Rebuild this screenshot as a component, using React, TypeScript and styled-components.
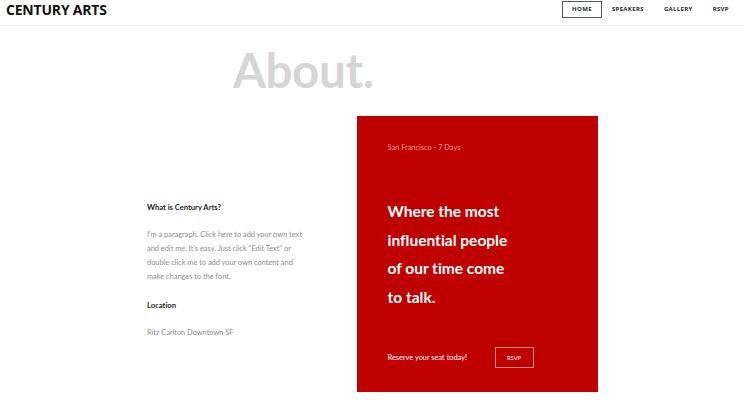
import React from "react";
import styled, { createGlobalStyle } from "styled-components";

const Global = createGlobalStyle`
  html, body { margin: 0; padding: 0; background: #ffffff; }
  body {
    font-family: Lato, "Open Sans", sans-serif;
    font-variant-ligatures: none;
    color: #222;
  }
  * { box-sizing: border-box; }
`;

const Header = styled.header`
  height: 26px;
  display: flex;
  align-items: center;
  justify-content: space-between;
  padding: 0 5px 0 6px;
  border-bottom: 1px solid #f1f1f1;
`;

const Logo = styled.div`
  font-family: "Open Sans", sans-serif;
  font-weight: 700;
  font-size: 14px;
  letter-spacing: -0.2px;
  color: #111;
  margin-top: -6px;
`;

const Nav = styled.nav`
  display: flex;
  align-items: center;
  margin-top: -7px;
`;

const NavItem = styled.a<{ $active?: boolean }>`
  display: flex;
  align-items: center;
  justify-content: center;
  height: 17px;
  padding: 0 9px;
  font-family: "Open Sans", sans-serif;
  font-size: 6px;
  font-weight: 700;
  letter-spacing: 0.35px;
  color: #222;
  border: 1px solid ${(p) => (p.$active ? "#555" : "transparent")};
`;

const Main = styled.main`
  width: 452px;
  margin: 0 auto;
`;

const Title = styled.h1`
  margin: 16px 0 0 87px;
  font-family: Lato, sans-serif;
  font-weight: 700;
  font-size: 47.5px;
  line-height: 56px;
  letter-spacing: -0.4px;
  color: #d6d6d6;
`;

const Row = styled.div`
  display: flex;
  align-items: flex-start;
  margin-top: 18px;
`;

const Info = styled.section`
  width: 211px;
  padding: 84px 30px 0 1px;
`;

const Heading = styled.h3`
  margin: 0;
  font-size: 7.6px;
  font-weight: 700;
  line-height: 14px;
  color: #1e1e1e;
`;

const Para = styled.p`
  margin: 14px 0 14px;
  font-size: 7.4px;
  line-height: 14px;
  color: #8c8c8c;
  white-space: nowrap;
`;

const Card = styled.section`
  width: 242px;
  height: 276px;
  background: #bf0000;
  padding: 26px 20px 0 31px;
  display: flex;
  flex-direction: column;
`;

const Eyebrow = styled.div`
  font-size: 7.4px;
  line-height: 12px;
  color: #f19a9a;
`;

const Headline = styled.h2`
  margin: 43px 0 0;
  font-size: 15.5px;
  font-weight: 700;
  line-height: 28.5px;
  color: #ffffff;
`;

const Footer = styled.div`
  display: flex;
  align-items: center;
  margin-top: 36px;
`;

const Reserve = styled.span`
  font-size: 7.4px;
  color: #ffffff;
  width: 107px;
`;

const RsvpButton = styled.button`
  width: 39px;
  height: 21px;
  background: transparent;
  border: 1px solid #f28a8a;
  color: #ffffff;
  font-family: inherit;
  font-size: 5.8px;
  padding: 0;
`;

export default function App() {
  return (
    <>
      <Global />
      <Header>
        <Logo>CENTURY ARTS</Logo>
        <Nav>
          <NavItem $active>HOME</NavItem>
          <NavItem>SPEAKERS</NavItem>
          <NavItem>GALLERY</NavItem>
          <NavItem>RSVP</NavItem>
        </Nav>
      </Header>
      <Main>
        <Title>About.</Title>
        <Row>
          <Info>
            <Heading>What is Century Arts?</Heading>
            <Para>
              I'm a paragraph. Click here to add your own text
              <br />
              and edit me. It's easy. Just click “Edit Text” or
              <br />
              double click me to add your own content and
              <br />
              make changes to the font.
            </Para>
            <Heading>Location</Heading>
            <Para>Ritz Carlton Downtown SF</Para>
          </Info>
          <Card>
            <Eyebrow>San Francisco - 7 Days</Eyebrow>
            <Headline>
              Where the most
              <br />
              influential people
              <br />
              of our time come
              <br />
              to talk.
            </Headline>
            <Footer>
              <Reserve>Reserve your seat today!</Reserve>
              <RsvpButton>RSVP</RsvpButton>
            </Footer>
          </Card>
        </Row>
      </Main>
    </>
  );
}
